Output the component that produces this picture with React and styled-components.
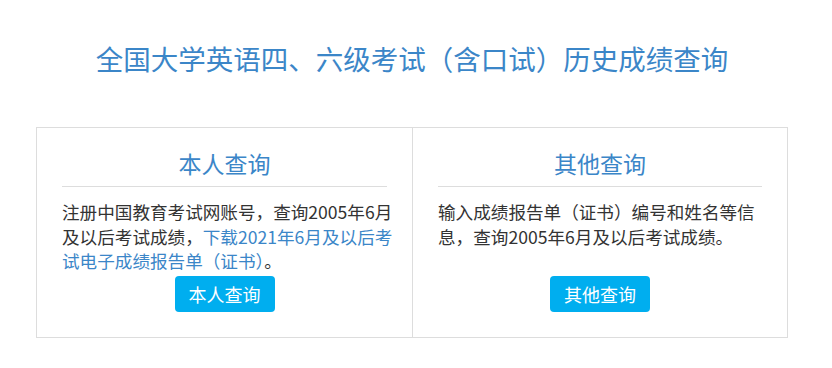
import React from 'react';
import styled, { createGlobalStyle } from 'styled-components';

const GlobalStyle = createGlobalStyle`
  html, body {
    margin: 0;
    padding: 0;
    background: #fff;
  }
  body {
    font-family: "Microsoft YaHei", "Noto Sans CJK SC", sans-serif;
    color: #333;
  }
`;

const Page = styled.div`
  padding: 38px 8px 0 0;
`;

const Title = styled.h1`
  margin: 0;
  font-size: 27.5px;
  line-height: 40px;
  font-weight: normal;
  color: #3b86c8;
  text-align: center;
`;

const Board = styled.div`
  width: 752px;
  margin: 49px auto 0;
  display: grid;
  grid-template-columns: 1fr 1fr;
  border: 1px solid #ddd;
  box-sizing: border-box;
`;

const Cell = styled.section`
  padding: 20px 25px 25px;
  display: flex;
  flex-direction: column;
  border-left: ${p => (p.$first ? 'none' : '1px solid #ddd')};
`;

const Heading = styled.h2`
  margin: 0;
  font-size: 23px;
  line-height: 30px;
  font-weight: normal;
  color: #3b86c8;
  text-align: center;
  padding-bottom: 8px;
  border-bottom: 1px solid #ddd;
`;

const Desc = styled.p`
  margin: 13px -6px 2px 0;
  font-size: 17.6px;
  line-height: 24.5px;
  min-height: 73.5px;
  color: #333;
`;

const Link = styled.a`
  color: #3b86c8;
  text-decoration: none;
`;

const Button = styled.button`
  align-self: center;
  width: 100px;
  height: 36px;
  border: none;
  border-radius: 4px;
  background: #00aeef;
  color: #fff;
  font-family: inherit;
  font-size: 18px;
  cursor: pointer;
  padding: 0;
`;

export default function App() {
  return (
    <Page>
      <GlobalStyle />
      <Title>全国大学英语四、六级考试（含口试）历史成绩查询</Title>
      <Board>
        <Cell $first>
          <Heading>本人查询</Heading>
          <Desc>
            注册中国教育考试网账号，查询2005年6月及以后考试成绩，
            <Link href="#">下载2021年6月及以后考试电子成绩报告单（证书）</Link>。
          </Desc>
          <Button>本人查询</Button>
        </Cell>
        <Cell>
          <Heading>其他查询</Heading>
          <Desc>输入成绩报告单（证书）编号和姓名等信息，查询2005年6月及以后考试成绩。</Desc>
          <Button>其他查询</Button>
        </Cell>
      </Board>
    </Page>
  );
}
